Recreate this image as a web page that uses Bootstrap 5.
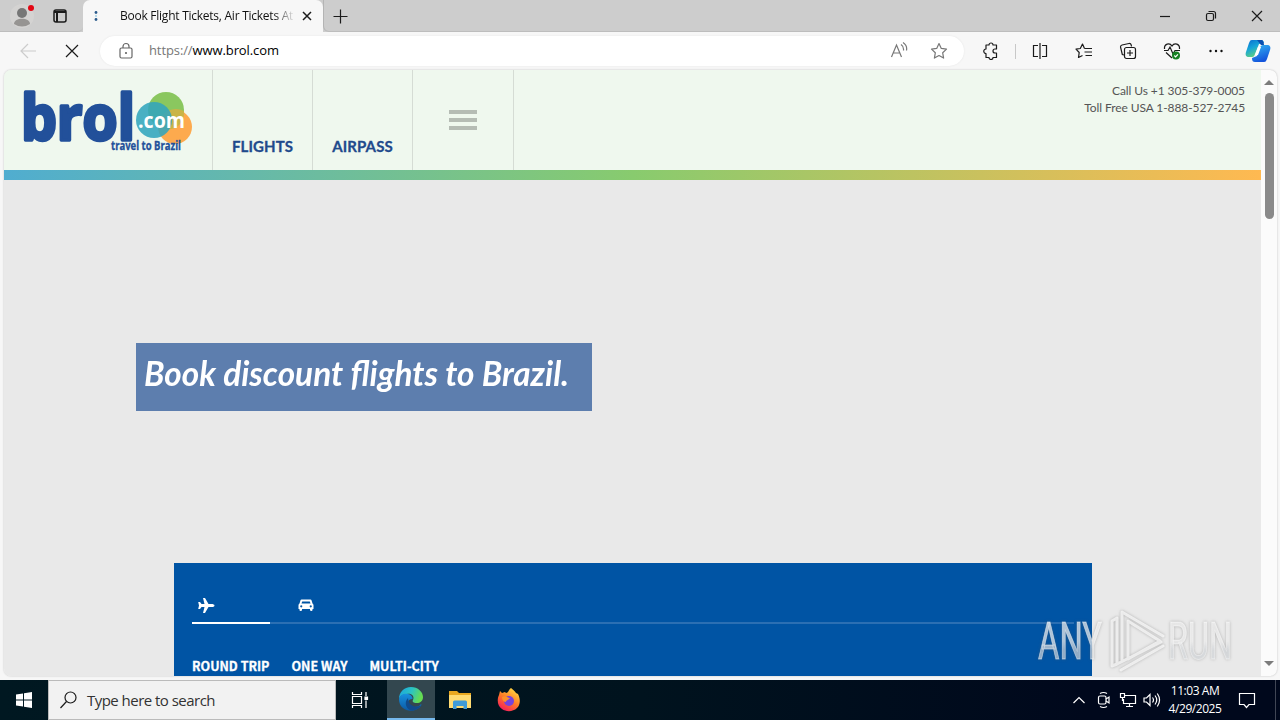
<!DOCTYPE html>
<html lang="en">
<head>
    <meta charset="UTF-8">
    <meta name="viewport" content="width=device-width, initial-scale=1.0">
    <title>Book Flight Tickets, Air Tickets</title>
    <link href="https://cdn.jsdelivr.net/npm/bootstrap@5.3.0/dist/css/bootstrap.min.css" rel="stylesheet">
    <style>
        body {
            width: 1280px;
            height: 720px;
            background: #f7f7f7;
            font-family: "Open Sans", "Noto Sans", sans-serif;
            font-size: 12px;
            color: #111;
        }
        svg {
            display: block;
            flex-shrink: 0;
        }
        .line-icon {
            fill: none;
            stroke: #1b1b1b;
            stroke-width: 1.2;
        }

        /* browser chrome */
        .title-bar {
            height: 32px;
            background: #cdcdcd;
        }
        .title-tools {
            width: 83px;
            padding-left: 9px;
            gap: 15px;
            border-bottom: 1px solid #bdbdbd;
            border-bottom-right-radius: 5px;
        }
        .browser-tab {
            width: 240px;
            padding: 0 10px 0 9px;
            background: #f7f7f7;
            border-radius: 7px 7px 0 0;
        }
        .tab-title {
            width: 175px;
            margin-left: 20px;
            overflow: hidden;
            letter-spacing: -.25px;
            -webkit-mask-image: linear-gradient(90deg, #000 88%, transparent);
            mask-image: linear-gradient(90deg, #000 88%, transparent);
        }
        .title-rest {
            border-left: 1px solid #b4b4b4;
            border-bottom: 1px solid #bdbdbd;
            border-bottom-left-radius: 6px;
        }
        .win-btn { width: 46px; }
        .tool-bar { height: 38px; }
        .tool-btn {
            width: 44px;
            display: flex;
            justify-content: center;
        }
        .address {
            width: 864px;
            height: 30px;
            margin-left: 6px;
            padding: 0 16px 0 17px;
            background: #fff;
            border-radius: 15px;
            box-shadow: 0 0 2px #e4e4e4;
        }
        .url {
            margin-left: 14px;
            font-size: 13px;
            letter-spacing: -.1px;
            color: #777;
        }

        /* web page */
        .viewport {
            height: 606px;
            margin: 0 3px 0 4px;
            border-radius: 7px;
            background: #fbfbfb;
            box-shadow: 0 0 2px #bbb;
        }
        .site { width: 1257px; background: #e9e9e9; }
        .site-header { height: 100px; background: #eff8ee; }
        .brand { width: 209px; border-right: 1px solid #d5dcd4; }
        .site-link {
            width: 100px;
            padding-bottom: 13px;
            border-right: 1px solid #d5dcd4;
            font: 700 15px/22px Lato, sans-serif;
            letter-spacing: .1px;
            -webkit-text-stroke: .3px #1f4a8c;
            color: #1f4a8c;
            text-decoration: none;
        }
        .menu-toggle { width: 101px; border-right: 1px solid #d5dcd4; }
        .menu-toggle i {
            width: 28px;
            height: 4px;
            background: #b5bcb4;
        }
        .phones {
            padding: 12px 16px 0 0;
            font: 400 12px/17px Lato, sans-serif;
            letter-spacing: -.09px;
            color: #555;
        }
        .rainbow {
            height: 10px;
            background: linear-gradient(90deg, #50add0, #88cb6e 50%, #ffb951);
        }
        .hero { padding-top: 163px; }
        .headline {
            width: 456px;
            height: 68px;
            margin: 0 0 152px 132px;
            padding: 8px 8px 0;
            background: #5d7eae;
            font: italic 700 35px/43px Lato, sans-serif;
            color: #fff;
        }
        .headline span {
            display: inline-block;
            transform: scaleX(.953);
            transform-origin: left;
        }
        .booking {
            width: 918px;
            height: 113px;
            margin-left: 170px;
            padding: 35px 18px 0;
            background: #0054a4;
            color: #fff;
        }
        .booking-tabs { height: 26px; border-bottom: 2px solid #2b6fb3; }
        .booking-tab { width: 78px; height: 26px; padding-left: 5px; }
        .booking-tab.current { border-bottom: 2px solid #fff; }
        .trip-types {
            margin-top: 32px;
            gap: 22px;
            font: 700 12.5px/19px "Noto Sans CJK JP", "Open Sans", sans-serif;
            -webkit-text-stroke: .3px #fff;
        }
        .scroll-thumb {
            width: 9px;
            height: 126px;
            margin-top: 7px;
            background: #8a8a8a;
            border-radius: 5px;
        }

        /* taskbar */
        .task-bar {
            height: 40px;
            margin-top: 4px;
            background: linear-gradient(90deg, #001821, #00131e 50%, #00081c 85%);
            color: #fff;
        }
        .task-btn {
            width: 48px;
            height: 40px;
            display: flex;
            align-items: center;
            justify-content: center;
        }
        .task-btn.running {
            background: #33474f;
            border-bottom: 2px solid #76b9ed;
        }
        .task-search {
            width: 288px;
            padding-left: 11px;
            gap: 10px;
            background: #f2f2f2;
            border: 1px solid #bbb;
            font-size: 15px;
            letter-spacing: -.53px;
            color: #333;
        }
        .tray .line-icon { stroke: #fff; }
        .clock {
            width: 68px;
            line-height: 18px;
            letter-spacing: -.45px;
        }
        .watermark { left: 1030px; top: 602px; }
    </style>
</head>
<body class="overflow-hidden position-relative text-nowrap">
    <div class="title-bar d-flex">
        <div class="title-tools d-flex align-items-center">
            <svg width="28" height="28" viewBox="0 0 28 28"><circle cx="13" cy="14" r="12" fill="#d4d3d2"/><circle cx="13" cy="11" r="5" fill="#777"/><path d="M5 22c0-7 16-7 16 0q-8 5-16 0" fill="#969492"/><circle cx="22" cy="6" r="3" fill="#e30613"/></svg>
            <svg class="line-icon" width="16" height="16" viewBox="0 0 16 16"><rect x="2" y="2" width="12" height="12" rx="2" stroke-width="1.5"/><path d="M2 4h12M5 4v10" stroke-width="2"/></svg>
        </div>
        <div class="browser-tab d-flex align-items-center">
            <svg width="8" height="12" viewBox="0 0 8 12"><circle cx="4" cy="2.500" r="1.400" fill="#2b5b8c"/><circle cx="4" cy="6" r="1" fill="#9fd0e6"/><circle cx="4" cy="9.500" r="1.400" fill="#2b5b8c"/></svg>
            <span class="tab-title">Book Flight Tickets, Air Tickets At</span>
            <svg class="line-icon ms-auto" width="12" height="12" viewBox="0 0 12 12"><path d="M2 2l8 8M10 2l-8 8" stroke-width="1.5"/></svg>
        </div>
        <div class="title-rest flex-grow-1 d-flex align-items-center">
            <svg class="line-icon ms-2" width="16" height="16" viewBox="0 0 16 16"><path d="M1.500 8.500h14M8.500 1.500v14"/></svg>
            <div class="d-flex ms-auto">
                <div class="win-btn d-flex justify-content-center"><svg class="line-icon" width="12" height="12" viewBox="0 0 12 12"><path d="M1 6.500h10"/></svg></div>
                <div class="win-btn d-flex justify-content-center"><svg class="line-icon" width="12" height="12" viewBox="0 0 12 12"><rect x="1.500" y="3.500" width="7" height="7" rx="1.500"/><path d="M3.500 1.500H8.500a2 2 0 0 1 2 2v5"/></svg></div>
                <div class="win-btn d-flex justify-content-center"><svg class="line-icon" width="12" height="12" viewBox="0 0 12 12"><path d="M1 1l10 10M11 1L1 11"/></svg></div>
            </div>
        </div>
    </div>

    <div class="tool-bar d-flex align-items-center">
        <div class="tool-btn" style="margin-left:6px"><svg class="line-icon" width="18" height="16" viewBox="0 0 18 16" style="stroke:#ccc"><path d="M17 8H2M9 1L2 8l7 7"/></svg></div>
        <div class="tool-btn"><svg class="line-icon" width="14" height="14" viewBox="0 0 14 14"><path d="M1 1l12 12M13 1L1 13"/></svg></div>
        <div class="address d-flex align-items-center">
            <svg class="line-icon" width="18" height="18" viewBox="0 0 18 18" style="stroke:#666"><rect x="3" y="6" width="12" height="10" rx="1.500"/><path d="M6 6V4.500a3 3 0 0 1 6 0V6"/><circle cx="9" cy="11" r=".5"/></svg>
            <span class="url">https://<span class="text-black">www.brol.com</span></span>
            <svg class="line-icon ms-auto" width="18" height="18" viewBox="0 0 18 18" style="stroke:#777"><path d="M1.500 15L6.500 3l5 12M3.300 11h6.400M11 2.500q3 2 2.500 6M13 .5q4.500 3 3.500 8"/></svg>
            <svg class="line-icon" width="18" height="18" viewBox="0 0 18 18" style="stroke:#777;margin-left:22px"><path d="M9 1.500l2.300 4.900 5.200.7-3.800 3.700.9 5.300L9 13.500l-4.600 2.600.9-5.300L1.500 7.100l5.200-.7z" stroke-linejoin="round"/></svg>
        </div>
        <div class="tool-btn ms-1"><svg class="line-icon" width="18" height="18" viewBox="0 0 18 18"><path d="M5 3h3a2 2 0 0 1 4 0h3.500v4h-1.500a2 2 0 0 0 0 4h1.500v4.500H12a2 2 0 0 1-4 0H5V11.500a2.200 2.200 0 0 1 0-4.500z" stroke-linejoin="round"/></svg></div>
        <div class="vr" style="height:15px;margin-left:3px;align-self:center;opacity:.2"></div>
        <div class="tool-btn" style="margin-left:2px"><svg class="line-icon" width="18" height="18" viewBox="0 0 18 18"><path d="M7 3.500H2.500v11H7M11 3.500h4.500v11H11M9 1v16"/></svg></div>
        <div class="tool-btn"><svg class="line-icon" width="18" height="18" viewBox="0 0 18 18"><path d="M9.500 6.500L7.500 2 5.300 6.500 1 7.200l3.200 3.300L3.500 15.500l4-2M9.500 6.500H17M9.500 10H17M10.500 13.500H17" stroke-linejoin="round"/></svg></div>
        <div class="tool-btn"><svg class="line-icon" width="18" height="18" viewBox="0 0 18 18"><path d="M5 13L3.300 12.500 1.500 5a2 2 0 0 1 1.500-2L10 1.500a2 2 0 0 1 2.200 1.500l.3 1.500"/><rect x="5.500" y="5.500" width="11" height="11" rx="2"/><path d="M11 8v6M8 11h6"/></svg></div>
        <div class="tool-btn"><svg class="line-icon" width="18" height="18" viewBox="0 0 18 18"><path d="M1.500 7C1 2 6.500 0 9 4c2.500-4 8-2 7.500 3M3 10.500l6 5.500M1 8.500h4L7 5l3 7 2-3.500h5"/><circle cx="13" cy="13.500" r="4" style="fill:#168023;stroke:none"/><path d="M11.300 13.500l1.300 1.300 2.300-2.500" style="stroke:#fff"/></svg></div>
        <div class="tool-btn"><svg width="16" height="16" viewBox="0 0 16 16" fill="#111"><circle cx="2.500" cy="8" r="1.200"/><circle cx="8" cy="8" r="1.200"/><circle cx="13.500" cy="8" r="1.200"/></svg></div>
        <svg style="margin-left:7px" width="26" height="24" viewBox="0 0 26 24">
            <defs>
                <linearGradient id="cpA" x2=".5" y2="1"><stop stop-color="#0a6ad0"/><stop offset=".5" stop-color="#16a5d8"/><stop offset="1" stop-color="#63d37c"/></linearGradient>
                <linearGradient id="cpB" x2=".4" y2="1"><stop stop-color="#35b8f3"/><stop offset="1" stop-color="#1455dc"/></linearGradient>
            </defs>
            <path d="M7 1h9c2 0 2.500 1 3 3l-5 1-4 10c-1 3-2 3-4 3H4c-3 0-4-2-3-5L4 4c1-2 1-3 3-3z" fill="url(#cpA)"/>
            <path d="M19 23h-9c-2 0-3-1-3-4l5-2 3-8c1-3 2-3 4-3h3c3 0 4 2 3 5l-3 9c-1 2-1 3-3 3z" fill="url(#cpB)"/>
            <path d="M13 8h3l-3 8h-3z" fill="#fff"/>
            <path d="M12 1h4c2 0 2.500 1 3 5h-3z" fill="#0b4fb0"/>
        </svg>
    </div>

    <div class="viewport d-flex overflow-hidden">
        <main class="site">
            <header class="site-header d-flex">
                <a class="brand" href="#">
                    <svg width="208" height="100" viewBox="0 0 208 100" font-family="Open Sans, sans-serif" font-weight="700">
                        <circle cx="162" cy="40" r="18" fill="#8ac75f"/>
                        <circle cx="171" cy="57" r="17" fill="#fdaa4e"/>
                        <path d="M154 56a18 18 0 0 1 26-15 17 17 0 0 1-9 17 18 18 0 0 1-17-2" fill="#c9b447"/>
                        <circle cx="150" cy="50" r="18" fill="#32a5bd" fill-opacity=".88"/>
                        <text x="17" y="70" font-size="62" fill="#22509a" stroke="#22509a" stroke-width="3.500" stroke-linejoin="round" textLength="114" lengthAdjust="spacingAndGlyphs">brol</text>
                        <text x="134" y="58" font-size="21" fill="#fff" textLength="47" lengthAdjust="spacingAndGlyphs">.com</text>
                        <text x="107" y="80" font-size="11.500" fill="#22509a" stroke="#22509a" stroke-width=".3" textLength="70" lengthAdjust="spacingAndGlyphs">travel to Brazil</text>
                    </svg>
                </a>
                <a class="site-link d-flex align-items-end justify-content-center" href="#">FLIGHTS</a>
                <a class="site-link d-flex align-items-end justify-content-center" href="#">AIRPASS</a>
                <div class="menu-toggle d-flex flex-column align-items-center justify-content-center gap-1"><i></i><i></i><i></i></div>
                <div class="phones ms-auto text-end">Call Us +1 305-379-0005<br>Toll Free USA 1-888-527-2745</div>
            </header>
            <div class="rainbow"></div>
            <section class="hero">
                <h1 class="headline"><span>Book discount flights to Brazil.</span></h1>
                <div class="booking">
                    <div class="booking-tabs d-flex">
                        <div class="booking-tab current"><svg width="18" height="16" viewBox="0 0 18 16" fill="#fff"><path d="M17.500 7.500c0 1-1.500 1.500-3 1.500h-3L8 15H6L7.500 9H4.500L3 11H1.200L2 7.500 1.200 4H3l1.500 2h3L6 0h2l3.500 6h3c1.500 0 3 .5 3 1.500z"/></svg></div>
                        <div class="booking-tab" style="margin-left:23px"><svg width="16" height="16" viewBox="0 0 16 16" fill="#fff"><path fill-rule="evenodd" d="M3.500 1.500h9q.8 0 1 .8L14.500 5.500q1 .5 1 1.800V11h-1v1q0 1-1.200 1T12 12v-1H4v1q0 1-1.300 1T1.500 12v-1h-1V7.300q0-1.300 1-1.800l1-3.200q.2-.8 1-.8zM4.200 3.500L3.500 5.500h9L11.800 3.500zM3.200 7.200a1.100 1.100 0 1 0 .1 0zm9.500 0a1.100 1.100 0 1 0 .1 0z"/></svg></div>
                    </div>
                    <div class="trip-types d-flex"><span>ROUND TRIP</span><span>ONE WAY</span><span>MULTI-CITY</span></div>
                </div>
            </section>
        </main>
        <div class="flex-grow-1 d-flex flex-column align-items-center pt-2">
            <svg width="10" height="8" viewBox="0 0 10 8"><path d="M0 7l5-5 5 5z" fill="#7c7c7c"/></svg>
            <div class="scroll-thumb"></div>
            <svg class="mt-auto mb-2" width="10" height="8" viewBox="0 0 10 8"><path d="M0 1l5 5 5-5z" fill="#7c7c7c"/></svg>
        </div>
    </div>

    <div class="task-bar d-flex">
        <div class="task-btn"><svg width="16" height="16" viewBox="0 0 16 16" fill="#fff"><path d="M0 2.500l7-1v6H0zM8 1.300L16 0v7.500H8zM0 8.500h7v6l-7-1zM8 8.500h8V16l-8-1.300z"/></svg></div>
        <div class="task-search d-flex align-items-center">
            <svg class="line-icon" width="17" height="18" viewBox="0 0 17 18"><circle cx="10.500" cy="6.500" r="5.500"/><path d="M6.500 10.500L.5 17"/></svg>
            Type here to search
        </div>
        <div class="task-btn"><svg class="line-icon" width="18" height="18" viewBox="0 0 18 18" style="stroke:#fff"><path d="M1.500 1v2.500h9V1M1.500 17v-2.500h9V17M1.500 5.500h9v7h-9zM15 1v4M15 9.500V17"/><path d="M14 6h2.500v2.500H14z" fill="#fff"/></svg></div>
        <div class="task-btn running" style="margin-left:3px">
            <svg width="24" height="24" viewBox="0 0 24 24">
                <defs>
                    <linearGradient id="edA" y2=".3"><stop stop-color="#1aa3df"/><stop offset=".55" stop-color="#2bc3c4"/><stop offset="1" stop-color="#65dc52"/></linearGradient>
                    <linearGradient id="edB" x2="0" y2="1"><stop stop-color="#1791df"/><stop offset="1" stop-color="#0c59a4"/></linearGradient>
                </defs>
                <path d="M0 12C0 5 5 0 12 0s12 5 12 10c0 4-3 6-6 6-4 0-5-1.500-4-3 2-4-2-7-6-6-4 0-7 2-8 5z" fill="url(#edA)"/>
                <path d="M0 12C1 7 6 6 9 7c3 .5 5 3 4.500 5-6 0-6 7 1 8 3 .5 6-1 7-2.500.8-.7 1.200 0 .8.700C17 27 0 25.500 0 12z" fill="url(#edB)"/>
                <path d="M9 11c-5 5-1 13 5 12.500 4-.5 7-3 8.500-5.500-6 3.500-13 1-13.500-7z" fill="#114a8b"/>
            </svg>
        </div>
        <div class="task-btn" style="margin-left:1px"><svg width="22" height="20" viewBox="0 0 22 20"><path d="M0 1h8l2 2h12v15H0z" fill="#e9a820"/><path d="M0 5h22v13H0z" fill="#ffdb72"/><path d="M4 19v-7q0-1.500 1.500-1.500h11Q18 10.500 18 12v7h-3.500v-3h-7v3z" fill="#3f9bd8"/></svg></div>
        <div class="task-btn" style="margin-left:1px">
            <svg width="24" height="24" viewBox="0 0 24 24">
                <defs><linearGradient id="ffA" x1=".8" x2=".2" y2="1"><stop stop-color="#ffe044"/><stop offset=".5" stop-color="#ff7b25"/><stop offset="1" stop-color="#f5155f"/></linearGradient></defs>
                <path d="M14 0c2 2 4 3 5 5l2 1c3 6 2 11-1 14-4 4-11 4-15 1C0 18 0 11 2 7l1-4 2 2 3-1 1 1c3 0 2-3 5-5z" fill="url(#ffA)"/>
                <circle cx="12" cy="13" r="5" fill="#7543dc"/>
                <path d="M5 9c4-2 5 1 8 1-1 2-4 2-4 4-3 0-4-3-4-5z" fill="#ff9029"/>
            </svg>
        </div>
        <div class="tray d-flex align-items-center ms-auto">
            <svg class="line-icon" width="12" height="8" viewBox="0 0 12 8"><path d="M.5 7L6 1.500 11.500 7"/></svg>
            <svg class="line-icon" width="14" height="18" viewBox="0 0 14 18" style="margin-left:12px"><rect x="1.500" y="5" width="7.500" height="8" rx="1.500"/><path d="M9 8l3-2v6L9 10M3 2.500q3.500-2 7 0M3 15.500q3.500 2 7 0"/></svg>
            <svg class="line-icon" width="18" height="16" viewBox="0 0 18 16" style="margin-left:8px"><path d="M6 3.500h10.500v8H4.500V7M10.500 11.500v3M7 14.500h7M1.500 1.500h4v4h-4zM3.500 5.500V9"/></svg>
            <svg class="line-icon" width="18" height="16" viewBox="0 0 18 16" style="margin-left:6px"><path d="M1 6h2.500L7 2.500v11L3.500 10H1zM9.500 5.500q2 2.500 0 5M12 3.500q3.500 4.500 0 9M14.300 1.500q4.500 6.500 0 13"/></svg>
            <div class="clock text-center">11:03 AM<br>4/29/2025</div>
            <svg class="line-icon" width="18" height="18" viewBox="0 0 18 18" style="margin-left:9px;margin-right:19px"><path d="M1.500 2.500h15v11H11L8.500 16.500 6 13.500H1.500z"/></svg>
            <div class="vr h-100 me-1"></div>
        </div>
    </div>

    <svg class="watermark position-absolute" width="220" height="74" viewBox="0 0 220 74" font-family="Roboto, sans-serif" style="filter:drop-shadow(0 0 1.5px rgba(90,90,90,.55))">
        <defs><linearGradient id="wmFill" x2="0" y2="1"><stop offset=".5" stop-color="#fff" stop-opacity=".65"/><stop offset=".65" stop-color="#e4e8ec" stop-opacity=".6"/></linearGradient></defs>
        <g fill="url(#wmFill)" stroke="#fff" stroke-opacity=".45" stroke-width="1" font-size="51">
            <text x="8" y="57" textLength="64" lengthAdjust="spacingAndGlyphs">ANY</text>
            <text x="138" y="57" textLength="64" lengthAdjust="spacingAndGlyphs">RUN</text>
        </g>
        <path d="M82 64V19l5-3v46M92 58V10l41 24M98 19v38l32-18zM82 64l5-2 44-22M91 68l42-24" fill="none" stroke="#fff" stroke-opacity=".7" stroke-width="3" stroke-linecap="round" stroke-linejoin="round"/>
    </svg>
    <script src="https://cdn.jsdelivr.net/npm/bootstrap@5.3.0/dist/js/bootstrap.bundle.min.js"></script>
</body>
</html>
